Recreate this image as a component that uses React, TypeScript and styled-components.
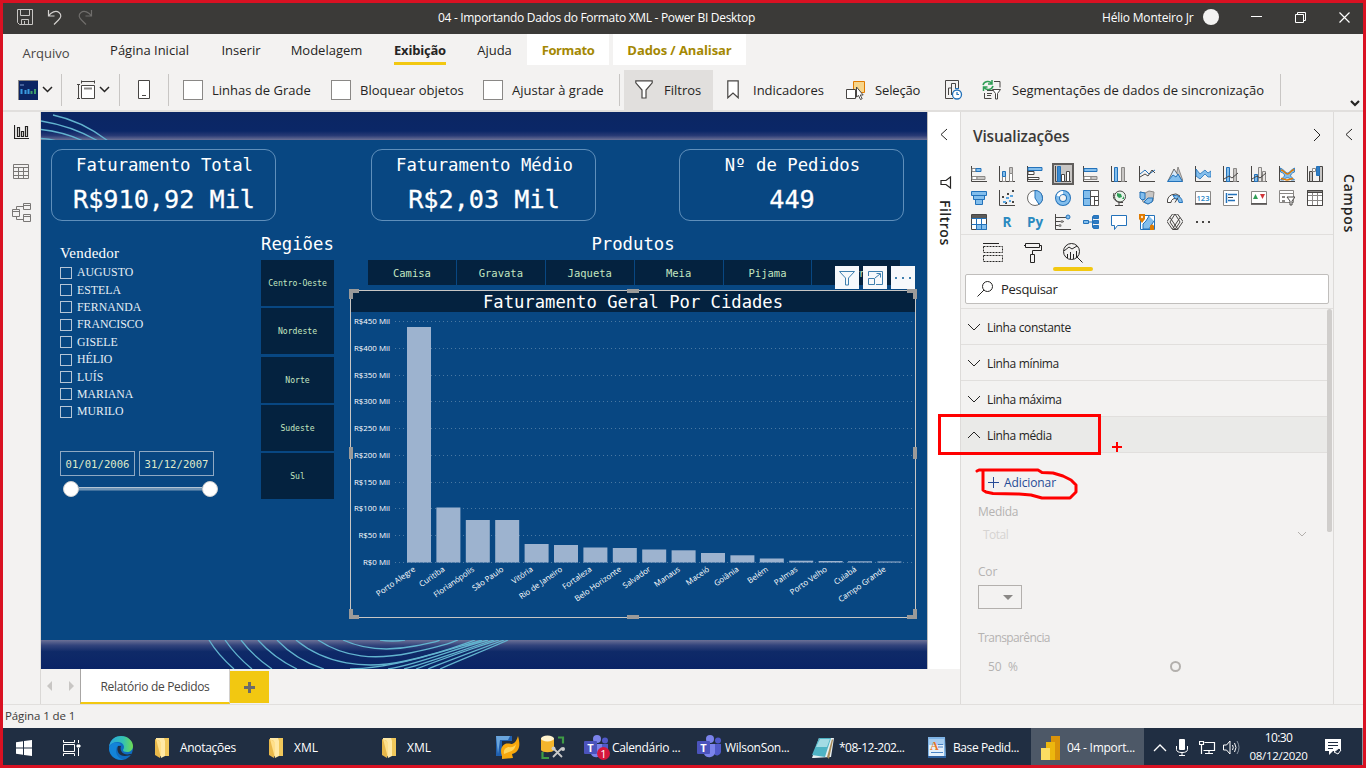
import React from "react";
import styled, { createGlobalStyle, css } from "styled-components";

const UI = `"Open Sans", "Noto Sans", sans-serif`;
const MONO = `"DejaVu Sans Mono", "Liberation Mono", monospace`;
const INK = "#252423";
const LINE = "#e1dfdd";

const GlobalStyle = createGlobalStyle`
  * { box-sizing: border-box; }
  body { margin: 0; font-family: ${UI}; font-size: 13px; color: ${INK}; overflow: hidden; }
  svg { display: block; flex: none; }
`;

const Frame = styled.div`
  position: relative;
  width: 1366px;
  height: 768px;
  border: 3px solid #d91122;
  background: #f3f2f1;
  display: flex;
  flex-direction: column;
`;

const Label = styled.span<{ $ls?: number; $size?: number; $w?: number }>`
  white-space: nowrap;
  font-size: ${(p) => p.$size ?? 13}px;
  letter-spacing: ${(p) => p.$ls ?? 0}px;
  font-weight: ${(p) => p.$w ?? 400};
`;

const Slot = styled.div<{ $w: number }>`
  width: ${(p) => p.$w}px;
  flex: none;
  display: flex;
  align-items: center;
`;

/* Title bar */
const TitleBar = styled.header`
  height: 31px;
  flex: none;
  background: #3b3a38;
  color: #fff;
  display: flex;
  align-items: center;
  padding-bottom: 3px;
  padding-left: 14px;
`;
const Avatar = styled.div`
  width: 16px;
  height: 16px;
  border-radius: 50%;
  background: #f3f2f1;
`;

/* Ribbon */
const TabRow = styled.nav`
  height: 33px;
  flex: none;
  display: flex;
`;
const RibbonTab = styled.div<{ $w: number; $kind?: "file" | "active" | "tool" }>`
  width: ${(p) => p.$w}px;
  height: 31px;
  flex: none;
  display: flex;
  align-items: center;
  justify-content: center;
  ${(p) => p.$kind === "file" && css`padding-top: 7px; color: #484644;`}
  ${(p) => p.$kind === "active" && css`border-bottom: 3px solid #f2c811; padding-top: 3px; margin: 0 31px 0 13px;`}
  ${(p) => p.$kind === "tool" && css`background: #fff; color: #a48803; margin-right: 4px;`}
`;
const Ribbon = styled.div`
  height: 45px;
  flex: none;
  display: flex;
  align-items: center;
  padding: 3px 0 1px 0;
  border-bottom: 2px solid ${LINE};
`;
const Divider = styled.i`
  width: 1px;
  height: 32px;
  background: #c8c6c4;
  flex: none;
`;
const Check = styled.i`
  width: 20px;
  height: 20px;
  border: 1px solid #8a8886;
  background: #fff;
  margin-right: 9px;
  flex: none;
`;
const FilterButton = styled.div`
  width: 89px;
  height: 40px;
  background: #e1dfdd;
  display: flex;
  align-items: center;
  gap: 11px;
  padding-left: 11px;
  margin: 0 14px 0 4px;
  flex: none;
`;

/* Body */
const Body = styled.div`
  height: 593px;
  flex: none;
  display: flex;
  border-bottom: 1px solid ${LINE};
`;
const Rail = styled.aside`
  width: 38px;
  border-right: 1px solid #dad8d6;
  display: flex;
  flex-direction: column;
  align-items: center;
  gap: 23.5px;
  padding: 12px 1px 0 0;
`;
const Center = styled.main`
  width: 919px;
  display: flex;
  flex-direction: column;
`;
const Stage = styled.div`
  display: flex;
  height: 557px;
`;
const Page = styled.section`
  width: 887px;
  background: #084782;
  border-right: 1px solid #c0bfbe;
  display: flex;
  flex-direction: column;
  color: #fff;
`;
const TopBand = styled.div`
  height: 28px;
  background: linear-gradient(180deg, #0b2663 0, #0b2767 68%, #283a75 84%, #6c7196 100%);
`;
const BottomBand = styled.div`
  height: 29px;
  background: linear-gradient(180deg, #6c7196 0, #33447c 18%, #0f2a68 40%, #0a2466 100%);
`;
const Cards = styled.div`
  display: flex;
  padding: 9px 0 0 10px;
  height: 81px;
`;
const Card = styled.div<{ $gap: number }>`
  width: 225px;
  height: 72px;
  border: 1px solid #5f8fbb;
  border-radius: 11px;
  margin-right: ${(p) => p.$gap}px;
  display: flex;
  flex-direction: column;
  align-items: center;
  font-family: ${MONO};
`;
const CardTitle = styled.div`
  font-size: 17.3px;
  line-height: 20px;
  margin-top: 5px;
  padding-left: 2px;
  white-space: pre;
`;
const CardValue = styled.div`
  font-size: 25.2px;
  line-height: 30px;
  margin-top: 10px;
  padding-left: 1px;
  -webkit-text-stroke: 0.3px #fff;
`;
const Lower = styled.div`
  display: flex;
  height: 419px;
`;
const Sellers = styled.div`
  width: 220px;
  padding: 23px 0 0 19px;
  font-family: "Liberation Serif", serif;
`;
const SellersTitle = styled.div`
  font-size: 15px;
  line-height: 18px;
  letter-spacing: 0.2px;
`;
const SellerRow = styled.div`
  height: 17.4px;
  display: flex;
  align-items: center;
  gap: 5px;
  font-size: 11.8px;
  color: #e6eef5;
`;
const SellerList = styled.div`
  padding-top: 2px;
`;
const SellerBox = styled.i`
  width: 12px;
  height: 12px;
  border: 1px solid #b6c6d6;
`;
const Dates = styled.div`
  display: flex;
  gap: 4px;
  margin-top: 30px;
`;
const DateBox = styled.div`
  width: 75px;
  height: 25px;
  border: 1px solid #8fa9c3;
  font: 10.6px/24px ${MONO};
  color: #dfe9c9;
  text-align: center;
`;
const Track = styled.div`
  display: flex;
  align-items: center;
  margin: 5px 0 0 3px;
  width: 155px;
`;
const Knob = styled.i`
  width: 16px;
  height: 16px;
  border-radius: 50%;
  background: #fff;
  border: 1px solid #cfcfcf;
`;
const Rope = styled.i`
  flex: 1;
  height: 4px;
  background: #6d93b5;
  border-top: 1px solid #b4c5d4;
  border-bottom: 1px solid #3f6f9c;
`;
const Regions = styled.div`
  width: 89px;
  padding-top: 13px;
  font-family: ${MONO};
`;
const SectionTitle = styled.div<{ $center?: boolean }>`
  font: 17.3px/20px ${MONO};
  text-align: ${(p) => (p.$center ? "center" : "left")};
`;
const RegionTile = styled.div`
  width: 73px;
  height: 46px;
  margin-bottom: 2.25px;
  background: #04223f;
  color: #c3e6c0;
  font-size: 8.15px;
  display: flex;
  align-items: center;
  justify-content: center;
`;
const RegionTiles = styled.div`
  margin-top: 6px;
`;
const Right = styled.div`
  width: 566px;
  padding-top: 13px;
`;
const ProductTiles = styled.div`
  position: relative;
  display: flex;
  gap: 1px;
  margin: 6px 0 0 18px;
`;
const ProductTile = styled.div`
  width: 87.9px;
  height: 25px;
  background: #04223f;
  color: #c3e6c0;
  font: 10.5px/26px ${MONO};
  text-align: center;
`;
const VisualTools = styled.div`
  position: absolute;
  left: 467px;
  top: 6px;
  display: flex;
  gap: 4px;
`;
const VisualTool = styled.div`
  width: 24px;
  height: 23px;
  background: #f6f8fb;
  display: flex;
  align-items: center;
  justify-content: center;
`;
const Chart = styled.div`
  position: relative;
  margin-top: 5px;
  width: 566px;
  height: 328px;
  border: 1px solid #c8c6c4;
  display: flex;
  flex-direction: column;
`;
const ChartTitle = styled.div`
  height: 21px;
  background: #04223f;
  text-align: center;
  font: 17.2px/22px ${MONO};
  white-space: pre;
`;
const Handles = styled.svg`
  position: absolute;
  left: -2px;
  top: -2px;
`;
const FilterPane = styled.aside`
  width: 32px;
  background: #fff;
  display: flex;
  flex-direction: column;
  align-items: center;
`;
const Vertical = styled.div<{ $mt: number; $size: number; $ls: number }>`
  writing-mode: vertical-rl;
  font-size: ${(p) => p.$size}px;
  line-height: 20px;
  font-weight: 600;
  letter-spacing: ${(p) => p.$ls}px;
  margin-top: ${(p) => p.$mt}px;
  margin-left: 1px;
  white-space: nowrap;
`;
const FunnelWrap = styled.div`
  margin: 34px 0 0 3px;
`;
const PageTabs = styled.div`
  height: 35px;
  display: flex;
`;
const Arrows = styled.div`
  width: 39px;
  display: flex;
  gap: 17px;
  padding: 12px 0 0 6px;
`;
const PageTab = styled.div`
  width: 150px;
  height: 35px;
  background: #fff;
  border-left: 1px solid #a8a6a4;
  border-right: 1px solid #d2d0ce;
  border-bottom: 2px solid #f2c811;
  display: flex;
  align-items: center;
  justify-content: center;
  padding-top: 1px;
  color: #484644;
`;
const AddPage = styled.div`
  width: 39px;
  height: 32px;
  margin-top: 2px;
  background: #f2c811;
  display: flex;
  align-items: center;
  justify-content: center;
`;

/* Visualizations pane */
const VisPane = styled.aside`
  width: 373px;
  border-left: 1px solid #dddbd9;
  display: flex;
  flex-direction: column;
`;
const PaneHead = styled.div`
  height: 50px;
  flex: none;
  padding: 0 12px 2px 12px;
  display: flex;
  align-items: center;
  justify-content: space-between;
  color: #3b3a39;
`;
const HeadChevron = styled.div`
  padding-bottom: 3px;
`;
const VisGrid = styled.div`
  height: 73px;
  flex: none;
  border-bottom: 1px solid ${LINE};
  display: grid;
  grid-template-columns: repeat(13, 28px);
  grid-auto-rows: 24px;
  align-content: start;
  padding-left: 10px;
`;
const VisCell = styled.div<{ $on?: boolean }>`
  width: 22px;
  height: 22px;
  margin: 1px 0 0 -3px;
  display: flex;
  align-items: center;
  justify-content: center;
  ${(p) => p.$on && css`background: #c8c6c4; border: 2px solid #605e5c;`}
`;
const ScriptGlyph = styled.span`
  font: 700 13.5px/20px ${UI};
  color: #2b8ac0;
`;
const PaneTabs = styled.div`
  height: 39px;
  flex: none;
  display: flex;
  padding-left: 12px;
`;
const PaneTab = styled.div<{ $on?: boolean }>`
  position: relative;
  width: 40px;
  height: 36px;
  display: flex;
  justify-content: center;
  padding-top: 8px;
  &::after {
    content: "";
    position: absolute;
    left: 0;
    right: 0;
    bottom: 0;
    height: 4px;
    border-radius: 2px;
    background: ${(p) => (p.$on ? "#f2c811" : "transparent")};
  }
`;
const Search = styled.div`
  margin: 0 4px 4px;
  height: 30px;
  width: 364px;
  flex: none;
  border: 1px solid #c0bebc;
  border-radius: 2px;
  background: #fff;
  display: flex;
  align-items: center;
  padding-left: 11px;
  gap: 7px;
`;
const Scroller = styled.div`
  flex: 1;
  display: flex;
  border-top: 1px solid ${LINE};
`;
const Sections = styled.div`
  width: 366px;
`;
const Thumb = styled.i`
  width: 5px;
  height: 223px;
  border-radius: 3px 3px 2px 2px;
  background: #d0cecc;
`;
const Section = styled.div<{ $open?: boolean }>`
  height: 36px;
  border-bottom: 1px solid ${LINE};
  background: ${(p) => (p.$open ? "#eaeae8" : "transparent")};
  display: flex;
  align-items: center;
  padding: 1px 0 0 6px;
  gap: 6px;
`;
const Fields = styled.div`
  padding: 19px 0 0 17px;
  color: #b5b3b1;
  display: flex;
  flex-direction: column;
`;
const AddLink = styled.div`
  height: 20px;
  padding-left: 10px;
  display: flex;
  align-items: center;
  gap: 5px;
  color: #264b96;
`;
const FieldLabel = styled.div<{ $mt: number }>`
  margin-top: ${(p) => p.$mt}px;
  height: 18px;
  display: flex;
  align-items: center;
`;
const SelectRow = styled.div`
  display: flex;
  align-items: center;
  justify-content: space-between;
  width: 329px;
  height: 20px;
  margin-top: 4px;
  padding-left: 5px;
  color: #d6d4d2;
`;
const ColorBox = styled.div`
  width: 44px;
  height: 24px;
  margin-top: 5px;
  border: 1px solid #b3b0ad;
  display: flex;
  align-items: center;
  justify-content: flex-end;
  padding-right: 8px;
`;
const Percent = styled.div`
  display: flex;
  align-items: center;
  height: 20px;
  margin-top: 10px;
  padding-left: 10px;
`;
const SliderDot = styled.i`
  width: 11px;
  height: 11px;
  border: 2px solid #b3b0ad;
  border-radius: 50%;
  margin-left: 152px;
`;
const FieldsPane = styled.aside`
  width: 30px;
  border-left: 1px solid #dddbd9;
  display: flex;
  flex-direction: column;
  align-items: center;
`;
const Status = styled.footer`
  height: 23px;
  flex: none;
  padding-left: 2px;
  line-height: 21px;
  color: #3b3a39;
`;

/* Taskbar */
const Taskbar = styled.div`
  height: 37px;
  flex: none;
  background: #202e42;
  color: #fff;
  display: flex;
  align-items: center;
`;
const Task = styled.div<{ $w: number; $pl?: number; $gap?: number; $on?: boolean }>`
  width: ${(p) => p.$w}px;
  height: 37px;
  flex: none;
  display: flex;
  align-items: center;
  padding: 2px 0 0 ${(p) => p.$pl ?? 0}px;
  gap: ${(p) => p.$gap ?? 0}px;
  ${(p) => p.$on && css`background: #4d5867;`}
`;
const Clock = styled.div`
  width: 61px;
  display: flex;
  flex-direction: column;
  align-items: center;
  line-height: 18px;
  padding-top: 1px;
`;

/* Hand-drawn marks over the window */
const MarkBox = styled.div`
  position: absolute;
  left: 935px;
  top: 411px;
  width: 163px;
  height: 41px;
  border: 3px solid #ff0000;
`;
const MarkInk = styled.svg`
  position: absolute;
  left: 970px;
  top: 435px;
`;

type ChevProps = { dir: "l" | "r" | "u" | "d"; s?: number; c?: string; w?: number };
const Chevron = ({ dir, s = 6, c = INK, w = 1 }: ChevProps) => {
  const L = s * 2;
  const horiz = dir === "l" || dir === "r";
  const W = (horiz ? s : L) + 2;
  const H = (horiz ? L : s) + 2;
  const d = {
    l: `M${s + 1} 1L1 ${s + 1}L${s + 1} ${L + 1}`,
    r: `M1 1L${s + 1} ${s + 1}L1 ${L + 1}`,
    u: `M1 ${s + 1}L${s + 1} 1L${L + 1} ${s + 1}`,
    d: `M1 1L${s + 1} ${s + 1}L${L + 1} 1`,
  }[dir];
  return (
    <svg width={W} height={H} fill="none" stroke={c} strokeWidth={w}>
      <path d={d} />
    </svg>
  );
};

const K = "#484644";
const B = "#2372ba";
const F = "#83beec";
const G = "#8a8886";
const axes = <path d="M.5 0V15.5H16" fill="none" stroke={K} />;

const visIcons: React.ReactNode[] = [
  <>{axes}<path d="M1 2.500h4v3H1zM1 10.500h5v3H1z" fill="#fff" stroke={G} /><path d="M5 2.500h5v3H5z" fill={F} stroke={B} /><path d="M6 10.500h8v3H6z" fill="#c8c6c4" stroke={G} /></>,
  <>{axes}<path d="M3.500 10.500h3v5h-3zM10.500 7.500h3v8h-3z" fill="#fff" stroke={G} /><path d="M3.500 5.500h3v5h-3z" fill={F} stroke={B} /><path d="M10.500 1.500h3v6h-3z" fill="#c8c6c4" stroke={G} /></>,
  <>{axes}<path d="M1 1.500h14v3H1z" fill={F} stroke={B} /><path d="M1 5.500h6v3H1zM1 11.500h11v2H1z" fill="#fff" stroke={K} /></>,
  <>{axes}<path d="M2.500.5h3v15h-3z" fill="#3a8ad0" stroke={B} /><path d="M6.500 8.500h3v7h-3zM11.500 5.500h3v10h-3z" fill="#fff" stroke={K} /></>,
  <>{axes}<path d="M1 2.500h13v3H1z" fill={F} stroke={B} /><path d="M1 10.500h7v3H1z" fill="#fff" stroke={G} /><path d="M8 10.500h6v3H8z" fill="#c8c6c4" stroke={G} /></>,
  <>{axes}<path d="M3.500 1.500h3v14h-3z" fill={F} stroke={B} /><path d="M10.500 1.500h3v14h-3z" fill="#c8c6c4" stroke={G} /></>,
  <>{axes}<path d="M1 8l5-4 4 4 6-4" fill="none" stroke={B} /><path d="M1 11l5-3 3 2 4-6 3 3" fill="none" stroke={K} /></>,
  <><path d="M11 1l5 14H8z" fill="#c8c6c4" stroke={G} /><path d="M1 15L7 3l8 12z" fill="#d8eafa" stroke={K} strokeWidth=".8" /><path d="M.5 15.500L6 9l3 2 2-3 4.500 7.500z" fill={F} stroke={B} /></>,
  <>{axes}<path d="M1 3l4 5 5-4 3 3 3-2v6h-3l-3-3-5 5-4-3z" fill={F} stroke={B} strokeWidth=".8" /></>,
  <>{axes}<path d="M3.500 1.500h3v14h-3z" fill={F} stroke={B} /><path d="M10.500 2.500h3v13h-3z" fill="#c8c6c4" stroke={G} /><path d="M1 13l5-3 3 2 6-5" fill="none" stroke={K} /></>,
  <>{axes}<path d="M3.500 8.500h3v7h-3z" fill={F} stroke={B} /><path d="M7.500 1.500h3v14h-3zM11.500 5.500h3v10h-3z" fill="#e8e6e4" stroke={G} /><path d="M1 13l5-3 3 2 6-5" fill="none" stroke={K} /></>,
  <>{axes}<path d="M1.500 2c4 2 5 5 7 5s3-3 7-5v4c-3 1-4 3-4 4l4 4h-3c-3-3-5-3-8 0h-3l4-4c0-2-1-3-4-4z" fill={F} stroke={B} strokeWidth=".8" /><path d="M2 4c4 1 4 4 6.500 4S11 5 15 3.500M2 12.500c3 0 4 1.500 6 1.500s4-1.500 6-1.500" fill="none" stroke="#e07b00" strokeWidth="1.400" /></>,
  <>{axes}<path d="M2.500 5.500h3v10h-3zM12.500.5h3v15h-3z" fill="#c8c6c4" stroke={K} /><path d="M5.500 2.500h3v3h-3z" fill="#fff" stroke={G} /><path d="M9.500.5h3v9h-3z" fill="#2e7cc4" stroke={B} /></>,
  <><path d="M.5 1.500h15v4H.5zM2.500 5.500h11v4h-11zM4.500 9.500h7v5h-7z" fill={F} stroke={B} /></>,
  <>{axes}<g fill={K}><path d="M3 6h2v2H3zM8 3h2v2H8zM13 0h2v2h-2zM6 12h2v2H6zM13 11h2v2h-2z" /></g><path d="M4 11h3v2H4zM7 7h3v2H7zM11 5h3v2h-3zM10 10h2v2h-2z" fill="#5ba6e0" /></>,
  <><circle cx="8" cy="8" r="7.500" fill="#fff" stroke={K} strokeWidth=".8" /><path d="M8 .5a7.500 7.500 0 0 1 4 13.800L8 8z" fill={F} stroke={B} /></>,
  <><circle cx="8" cy="8" r="5.500" fill="none" stroke={B} strokeWidth="5" /><circle cx="8" cy="8" r="5.500" fill="none" stroke={F} strokeWidth="3" /><path d="M8 2.500A5.500 5.500 0 0 0 3 6" fill="none" stroke="#fff" strokeWidth="3" /></>,
  <><path d="M.5.5h7v15h-7z" fill={F} stroke={B} /><path d="M7.500.5h8v6h-8zM7.500 6.500h4v9h-4zM11.500 6.500h4v4h-4zM11.500 10.500h4v5h-4z" fill="#fff" stroke={K} strokeWidth=".9" /><path d="M.5 8.500h7" stroke={B} /></>,
  <><circle cx="9" cy="6.500" r="5.500" fill="#e8f4ea" stroke={K} /><path d="M6 3l4 1 1 3-3 1-2-2zM11 9l2-3v3z" fill="#2f9e56" /><path d="M3 3c-2 5 1 9 6 9.500h3M8 12v3M4 15.500h8" fill="none" stroke={K} /></>,
  <><path d="M1 2l5 1 4-2 5 1-1 9-5 3-5-2-1-4z" fill="#c8c6c4" stroke={G} /><path d="M1 2l5 1v6l-3 1-2-2zM9 8h5l-1 4-4 2-4-2z" fill={F} stroke={B} /></>,
  <><path d="M.5 12.500A7.500 7.500 0 0 1 13 6l-3 3a4 4 0 0 0-6 3.500z" fill="#fff" stroke={K} /><path d="M6 5.500a7.500 7.500 0 0 1 9.500 7H12A4 4 0 0 0 8 8.500z" fill={F} stroke={B} /><path d="M8 12.500l3-5" stroke={K} /></>,
  <><path d="M.5 1.500h15v12H.5z" fill="#fff" stroke={G} /><path d="M0 14h16" stroke={K} strokeWidth="1.500" /><text x="8" y="10.500" textAnchor="middle" fontSize="7.500" fontWeight="600" fontFamily={UI} fill="#1f86c9">123</text></>,
  <><path d="M.5.5h15v15H.5z" fill="#fff" stroke={G} /><path d="M3.500 3v10M5 4.500h9M5 10.500h7" stroke={B} strokeWidth="1.500" /><path d="M5 7.500h5" stroke={K} /></>,
  <><path d="M.5 1.500h15v12H.5z" fill="#fff" stroke={G} /><path d="M0 14h16" stroke={K} strokeWidth="1.500" /><path d="M2 9l2.500-5L7 9z" fill="#2f9e56" /><path d="M9 4h5l-2.500 5z" fill="#d13438" /></>,
  <><path d="M.5.5h14v12H.5z" fill="#fff" stroke={G} /><path d="M1 3.500h13" stroke={G} /><path d="M3 6h3v2H3zM3 10h3v2H3z" fill={G} /><path d="M8 7h8l-3 4v4h-2v-4z" fill="#fff" stroke={K} /></>,
  <><path d="M.5.5h15v15H.5zM.5 5.500h15M.5 10.500h15M5.500 2v13.500M10.500 2v13.500" fill="#fff" stroke={G} /><path d="M.5.5h15v2H.5z" fill={G} stroke={K} /><path d="M.5.5v15h15V.5" fill="none" stroke={K} /></>,
  <><path d="M.5.5h15v15H.5z" fill="#fff" stroke={K} /><path d="M5.500 10.500h10v5h-10zM10.500 4v11.500" fill={F} stroke={B} /><path d="M.5 4.500h15M.5 10.500h15M5.500 1v14" stroke={B} /><path d="M1 1h14v3H1z" fill="#5c5a58" /></>,
  "R",
  "Py",
  <>{axes}<path d="M1 3.500h10M1 7.500h8M1 11.500h4" stroke={K} /><circle cx="13" cy="3" r="2" fill={F} stroke={B} /><circle cx="7" cy="7.500" r="1.500" fill={G} /><circle cx="5" cy="11.500" r="1.500" fill={G} /></>,
  <><path d="M.5 6.500h5v3h-5z" fill={F} stroke={B} /><path d="M6 8h3M9.500 2.500v11M9 3h2M9 13h2" stroke={B} /><path d="M10.500 1.500h5v3h-5zM10.500 6.500h5v3h-5zM10.500 11.500h5v3h-5z" fill="#2e7cc4" stroke={B} /></>,
  <path d="M.5 1.500h15v10h-9l-3 4v-4h-3z" fill="#fff" stroke={B} />,
  <><path d="M1.500 1.500h14v14h-14z" fill="#fff" stroke={B} /><path d="M10 2L7 7l-3 3v5h6l3-5 2-3" fill={F} stroke={B} /><path d="M0 0h6v5L3 9 0 5z" fill="#e07b00" /><path d="M3 1.500l1.200 1.500L3 4.500 1.800 3z" fill="#fff" /><path d="M11 13a2 2 0 1 1 4-1v4h-4z" fill="#e07b00" /></>,
  <path d="M5.500 0L0 7.500 5.500 15.500H10.500L16 7.500 10.500 0zM8 0L3 8l5 7.500M3 3.500l8 12M8 0l5 8-5 7.500M13 3.500L5.500 15" fill="none" stroke={K} />,
  <g fill={K}><path d="M1 7h2v2H1zM7 7h2v2H7zM13 7h2v2h-2z" /></g>,
];

const cities: [string, number][] = [
  ["Porto Alegre", 327], ["Curitiba", 507.5], ["Florianópolis", 520], ["São Paulo", 520],
  ["Vitória", 544], ["Rio de Janeiro", 545], ["Fortaleza", 547.5], ["Belo Horizonte", 548],
  ["Salvador", 549.5], ["Manaus", 550.3], ["Maceió", 553], ["Goiânia", 555.3],
  ["Belém", 558.5], ["Palmas", 560.7], ["Porto Velho", 561], ["Cuiabá", 561.3], ["Campo Grande", 561.5],
];

const Plot = () => (
  <svg width="564" height="305" viewBox="351 312 564 305" fontFamily={`"Open Sans", sans-serif`}>
    {Array.from({ length: 10 }, (_, i) => {
      const y = 321.5 + i * 26.75;
      return (
        <g key={i}>
          <text x="390" y={y + 2.7} fontSize="7.9" fontWeight="500" fill="#fff" textAnchor="end">{`R$${450 - i * 50} Mil`}</text>
          <path d={`M395 ${Math.floor(y) + 0.5}H914`} stroke="#4a78a2" strokeDasharray="1 3" />
        </g>
      );
    })}
    {cities.map(([name, top], i) => {
      const x = 407 + i * 29.4;
      return (
        <g key={name}>
          <rect x={x} y={top} width="24" height={562.5 - top} fill="#9db3cf" />
          <text transform={`translate(${x + 9} 570.5) rotate(-35)`} fontSize="7.9" fontWeight="500" fill="#fff" textAnchor="end">{name}</text>
        </g>
      );
    })}
  </svg>
);

const Folder = () => (
  <svg width="15" height="20" viewBox="0 0 15 20">
    <path d="M5 0h9v18H5z" fill="#f0c75a" />
    <path d="M1 0h8l1 3v15l-4 2V6L1 3z" fill="#ffe9a6" />
    <path d="M0 1l5 2v17l-5-3z" fill="#e8b84a" />
    <path d="M1 1l5 3v16" fill="#ffe08a" />
  </svg>
);
const Teams = ({ badge }: { badge?: boolean }) => (
  <svg width="26" height="26" viewBox="0 0 26 26">
    <circle cx="13" cy="4" r="4" fill="#7b83eb" />
    <circle cx="21" cy="5.500" r="3" fill="#5059c9" />
    <path d="M17 9h7v8a4 4 0 0 1-7 2z" fill="#5059c9" />
    <path d="M7 9h11v9a6 6 0 0 1-11 1z" fill="#7b83eb" />
    <rect x="0" y="6" width="13" height="13" rx="1" fill="#4b53bc" />
    <text x="6.500" y="16.500" fontFamily={UI} fontWeight="700" fontSize="11" fill="#fff" textAnchor="middle">T</text>
    {badge && <><circle cx="19.500" cy="18.500" r="6.500" fill="#d5173d" /><text x="19.500" y="22.500" fontFamily={UI} fontSize="11" fill="#fff" textAnchor="middle">1</text></>}
  </svg>
);

export default function App() {
  return (
    <Frame>
      <GlobalStyle />
      <TitleBar>
        <Slot $w={30}>
          <svg width="16" height="16" fill="none" stroke="#c8c6c4"><path d="M.5.500h15v15h-13l-2-2zM3.500.5v6h9v-6M4.500 15.500v-5h7v5M7.500 15v-3" /></svg>
        </Slot>
        <Slot $w={30}>
          <svg width="16" height="16" fill="none" stroke="#d2d0ce" strokeWidth="1.200"><path d="M1.500 1v6h6M1.500 7C4 3 9 1 12 3.500s2 5-.5 7.500L7 15.500" /></svg>
        </Slot>
        <Slot $w={361}>
          <svg width="16" height="16" fill="none" stroke="#6f6d6b" strokeWidth="1.200"><path d="M14.500 1v6h-6M14.500 7C12 3 7 1 4 3.500s-2 5 .5 7.500L9 15.500" /></svg>
        </Slot>
        <Slot $w={664}><Label $size={12} $ls={-0.31}>04 - Importando Dados do Formato XML - Power BI Desktop</Label></Slot>
        <Slot $w={101}><Label $size={12} $ls={-0.2}>Hélio Monteiro Jr</Label></Slot>
        <Slot $w={48}><Avatar /></Slot>
        <Slot $w={44}><svg width="11" height="2"><path d="M0 .5h11" stroke="#fff" /></svg></Slot>
        <Slot $w={44}><svg width="11" height="11" fill="none" stroke="#fff"><path d="M.5 2.500h8v8h-8zM2.500 2.500v-2h8v8h-2" /></svg></Slot>
        <svg width="11" height="11" stroke="#fff" strokeWidth="1.200"><path d="M.5.5l10 10M10.500.5l-10 10" /></svg>
      </TitleBar>

      <TabRow>
        <RibbonTab $w={86} $kind="file"><Label>Arquivo</Label></RibbonTab>
        <RibbonTab $w={121}><Label>Página Inicial</Label></RibbonTab>
        <RibbonTab $w={62}><Label>Inserir</Label></RibbonTab>
        <RibbonTab $w={109}><Label>Modelagem</Label></RibbonTab>
        <RibbonTab $w={52} $kind="active"><Label $w={700} $ls={-0.2}>Exibição</Label></RibbonTab>
        <RibbonTab $w={35}><Label>Ajuda</Label></RibbonTab>
        <Slot $w={15} />
        <RibbonTab $w={82} $kind="tool"><Label $w={700} $ls={-0.4}>Formato</Label></RibbonTab>
        <RibbonTab $w={133} $kind="tool"><Label $w={700} $ls={-0.1}>Dados / Analisar</Label></RibbonTab>
      </TabRow>

      <Ribbon>
        <Slot $w={15} />
        <Slot $w={24}>
          <svg width="20" height="20"><path d="M0 0h20v20H0z" fill="#0c2563" /><path d="M0 .5h20M.5 0v20" stroke="#8a8886" /><path d="M3.500 14V9M7.500 14v-4M10.500 14V9" stroke="#3a9ae0" strokeWidth="2" /><path d="M13.500 14v-3M17 14V9" stroke="#3d9d6b" strokeWidth="2" /><path d="M2 5h4" stroke="#7a9ad0" /></svg>
        </Slot>
        <Slot $w={19}><Chevron dir="d" s={4.5} w={1.5} /></Slot>
        <Divider />
        <Slot $w={15} />
        <Slot $w={22}>
          <svg width="19" height="19" fill="none" stroke={K}><path d="M4.500 5.500h13v13h-13z" fill="#fff" /><path d="M7 8.500h8" stroke={G} strokeWidth="2" /><path d="M4.500.5v3M17.500.5v3M4.500 1.500h13M0 4.500h3M0 18.500h3M1.500 4.500v14" /></svg>
        </Slot>
        <Slot $w={20}><Chevron dir="d" s={4.5} w={1.5} /></Slot>
        <Divider />
        <Slot $w={18} />
        <Slot $w={30}>
          <svg width="12" height="19" fill="#fff" stroke={K}><path d="M.5.500h11v18H.5zM4 15.500h4" /></svg>
        </Slot>
        <Divider />
        <Slot $w={14} />
        <Slot $w={148}><Check /><Label $size={13}>Linhas de Grade</Label></Slot>
        <Slot $w={152}><Check /><Label $size={13}>Bloquear objetos</Label></Slot>
        <Slot $w={136}><Check /><Label $size={13}>Ajustar à grade</Label></Slot>
        <Divider />
        <FilterButton>
          <svg width="18" height="19" fill="#fff" stroke={K} strokeWidth="1.200"><path d="M.8.8h16.400v2L11 10v8H7v-8L.8 2.800z" /></svg>
          <Label>Filtros</Label>
        </FilterButton>
        <Slot $w={26}><svg width="12" height="19" fill="#fff" stroke={K} strokeWidth="1.200"><path d="M.8.8h10.400v17L6 13 .8 17.800z" /></svg></Slot>
        <Slot $w={93}><Label>Indicadores</Label></Slot>
        <Slot $w={29}>
          <svg width="20" height="20"><path d="M7.500 1.500h11v11h-11z" fill="#f7d58a" stroke="#e07b00" /><path d="M.5 9.500h9v9h-9z" fill="#fff" stroke={K} /><path d="M10.500 7v10l2-1.500 2 4 1.700-.8-2-3.700h3z" fill="#fff" stroke={K} /></svg>
        </Slot>
        <Slot $w={70}><Label $ls={-0.15}>Seleção</Label></Slot>
        <Slot $w={37}>
          <svg width="18" height="20" fill="none" stroke={K}><path d="M8 18.500H.5V.5h13V8" /><path d="M3.500 15v-7h3v7M6.500 8V3.500h4V9" /><g stroke="#2372ba"><circle cx="12" cy="14.500" r="4.500" fill="#fff" strokeWidth="1.300" /><path d="M10 8.500h4M12 12v2.500h2" strokeWidth="1.200" /></g></svg>
        </Slot>
        <Slot $w={30}>
          <svg width="20" height="20" fill="none" stroke={K}><path d="M12 1.500h6v6M2.500 13v5.500h7M5 10.500h7M5 13.500h5M5 15.500h4" /><path d="M10.500 9.500h8l-3 4v5.500h-2v-5.500z" fill="#fff" /><g stroke="#2f9e56" strokeWidth="1.500"><path d="M1 5c1-4 7-5 9-1M10 0v4H6M11 6c-1 4-7 5-9 1M1.500 11V7h4" /></g></svg>
        </Slot>
        <Slot $w={268}><Label>Segmentações de dados de sincronização</Label></Slot>
        <Divider />
        <Slot $w={69} />
        <Slot $w={10}><svg width="10" height="34"><path d="M1 28l4 4 4-4" fill="none" stroke={INK} strokeWidth="2.200" /></svg></Slot>
      </Ribbon>

      <Body>
        <Rail>
          <svg width="15" height="16" fill="none" stroke={INK}><path d="M.5 1v13.500H15M3.500 3.500h2v9h-2zM7.500 7.500h2v5h-2zM11.500 2.500h2v10h-2z" strokeWidth="1.200" /></svg>
          <svg width="17" height="16" fill="none" stroke="#797775"><path d="M.5.5h15v14H.5zM.5 3.500h15M.5 7.500h15M.5 11.500h15M5.500 3.500v11M10.500 3.500v11" /></svg>
          <svg width="19" height="19" fill="none" stroke="#797775"><path d="M.5 6.500h7v7h-7zM.5 8.500h7M11.500.5h7v6h-7zM11.500 2.500h7M11.500 11.500h7v7h-7zM11.500 13.500h7M4.500 6V3.500H11M4.500 14v2.500H11" /></svg>
        </Rail>
        <Center>
          <Stage>
            <Page>
              <TopBand>
                <svg width="886" height="28" viewBox="41 112 886 28" fill="none" stroke="#62b4cf" strokeWidth="1.300">
                  <path d="M53 115Q82 121 108 141M41 121Q72 126 98 141M41 129.500Q64 132 83 141M41 138.500Q50 139 57 141" />
                </svg>
              </TopBand>
              <Cards>
                <Card $gap={95}><CardTitle>Faturamento Total</CardTitle><CardValue>R$910,92 Mil</CardValue></Card>
                <Card $gap={83}><CardTitle>Faturamento Médio</CardTitle><CardValue>R$2,03 Mil</CardValue></Card>
                <Card $gap={0}><CardTitle>Nº de Pedidos</CardTitle><CardValue>449</CardValue></Card>
              </Cards>
              <Lower>
                <Sellers>
                  <SellersTitle>Vendedor</SellersTitle>
                  <SellerList>
                    {["AUGUSTO", "ESTELA", "FERNANDA", "FRANCISCO", "GISELE", "HÉLIO", "LUÍS", "MARIANA", "MURILO"].map((n) => (
                      <SellerRow key={n}><SellerBox />{n}</SellerRow>
                    ))}
                  </SellerList>
                  <Dates><DateBox>01/01/2006</DateBox><DateBox>31/12/2007</DateBox></Dates>
                  <Track><Knob /><Rope /><Knob /></Track>
                </Sellers>
                <Regions>
                  <SectionTitle>Regiões</SectionTitle>
                  <RegionTiles>
                    {["Centro-Oeste", "Nordeste", "Norte", "Sudeste", "Sul"].map((r) => <RegionTile key={r}>{r}</RegionTile>)}
                  </RegionTiles>
                </Regions>
                <Right>
                  <SectionTitle $center>Produtos</SectionTitle>
                  <ProductTiles>
                    {["Camisa", "Gravata", "Jaqueta", "Meia", "Pijama", "Terno"].map((p) => <ProductTile key={p}>{p}</ProductTile>)}
                    <VisualTools>
                      <VisualTool><svg width="16" height="16" fill="none" stroke="#3f7fae"><path d="M.5 1.500h15L9.500 8v7h-3V8z" /></svg></VisualTool>
                      <VisualTool><svg width="15" height="14" fill="none" stroke="#3f7fae"><path d="M.5 5V.5h14v13H8M.5 7.500h6v6h-6zM7 7l5-4M8.500 2.500h4v4" /></svg></VisualTool>
                      <VisualTool><svg width="16" height="4" fill="#3f7fae"><path d="M0 1h2v2H0zM7 1h2v2H7zM14 1h2v2h-2z" /></svg></VisualTool>
                    </VisualTools>
                  </ProductTiles>
                  <Chart>
                    <ChartTitle>Faturamento Geral Por Cidades</ChartTitle>
                    <Plot />
                    <Handles width="568" height="330" fill="none" stroke="#9b9a99" strokeWidth="4">
                      <path d="M2 10V2h8M558 2h8v8M566 320v8h-8M10 328H2v-8M278 2h12M278 328h12M2 158v12M566 158v12" />
                    </Handles>
                  </Chart>
                </Right>
              </Lower>
              <BottomBand>
                <svg width="886" height="29" viewBox="41 640 886 29" fill="none" stroke="#62b4cf" strokeWidth="1.300">
                  <path d="M209 640Q218 655 234 669M225 640Q236 656 252 669M241 640Q253 656 272 669M258 640Q274 658 297 669M277 640Q296 660 324 669" />
                  <path d="M296 640C325 664 365 670 405 661S455 647 475 640M318 640C345 658 375 660 410 653S450 643 458 640M343 640C365 650 390 651 415 646S435 642 440 640" />
                  <path d="M380 640q12 2 25 0M350 669C395 668 440 652 482 640M388 669C420 664 450 650 488 640M404 669C430 662 462 650 494 640M416 669C440 660 470 649 499 640M428 669C450 660 478 650 504 640M440 669C460 660 486 650 508 640" />
                </svg>
              </BottomBand>
            </Page>
            <FilterPane>
              <svg width="8" height="30"><path d="M7 17L1 22.500 7 28" fill="none" stroke={INK} /></svg>
              <FunnelWrap><svg width="12" height="13" viewBox="0 0 12 13" fill="none" stroke={INK} strokeWidth="1.200"><path d="M10.500 1v11L6 8.500H1v-4h5z" /></svg></FunnelWrap>
              <Vertical $mt={11} $size={14} $ls={0.5}>Filtros</Vertical>
            </FilterPane>
          </Stage>
          <PageTabs>
            <Arrows>
              <svg width="5" height="10"><path d="M5 0v10L0 5z" fill="#c8c6c4" /></svg>
              <svg width="5" height="10"><path d="M0 0v10l5-5z" fill="#c8c6c4" /></svg>
            </Arrows>
            <PageTab><Label $size={12} $ls={-0.32}>Relatório de Pedidos</Label></PageTab>
            <AddPage><svg width="11" height="11"><path d="M5.500 0v11M0 5.500h11" stroke="#6b6a68" strokeWidth="3" /></svg></AddPage>
          </PageTabs>
        </Center>
        <VisPane>
          <PaneHead>
            <Label $size={15.5} $w={600} $ls={-0.2}>Visualizações</Label>
            <HeadChevron><Chevron dir="r" s={6} /></HeadChevron>
          </PaneHead>
          <VisGrid>
            {visIcons.map((icon, i) => (
              <VisCell key={i} $on={i === 3}>
                {typeof icon === "string" ? <ScriptGlyph>{icon}</ScriptGlyph> : <svg width="16" height="16" viewBox="0 0 16 16">{icon}</svg>}
              </VisCell>
            ))}
          </VisGrid>
          <PaneTabs>
            <PaneTab><svg width="20" height="20" fill="none" stroke={INK}><path d="M0 .5h16" /><path d="M.5 3.500h19v6H.5zM.5 12.500h19v6H.5z" strokeDasharray="2 1" /></svg></PaneTab>
            <PaneTab><svg width="19" height="21" fill="none" stroke={INK}><path d="M1.500.5h14v4h-14zM0 2.500h1M15.500 2.500h2v5h-9v4M6.500 11.500h4v8h-4z" /></svg></PaneTab>
            <PaneTab $on><svg width="20" height="20" fill="none" stroke={INK}><circle cx="8.500" cy="8.500" r="8" /><path d="M14 14l5.500 5.500M1 8l5-4 3 2 5-3M4.500 15v-4M7.500 16V9M10.500 16v-5M13.500 14V8" /></svg></PaneTab>
          </PaneTabs>
          <Search>
            <svg width="17" height="16" fill="none" stroke={INK}><circle cx="10.500" cy="5.500" r="5" /><path d="M7 9l-6.500 6.500" /></svg>
            <Label $size={13} $ls={-0.3}>Pesquisar</Label>
          </Search>
          <Scroller>
            <Sections>
              {["Linha constante", "Linha mínima", "Linha máxima"].map((t) => (
                <Section key={t}><Chevron dir="d" s={6} /><Label $size={12} $ls={-0.35}>{t}</Label></Section>
              ))}
              <Section $open><Chevron dir="u" s={6} /><Label $size={12} $ls={-0.35}>Linha média</Label></Section>
              <Fields>
                <AddLink><svg width="11" height="11" stroke="#264b96"><path d="M5.500 0v11M0 5.500h11" /></svg><Label $size={12} $ls={-0.1}>Adicionar</Label></AddLink>
                <FieldLabel $mt={10}><Label $size={12} $ls={-0.3}>Medida</Label></FieldLabel>
                <SelectRow><Label $size={12} $ls={-0.5}>Total</Label><Chevron dir="d" s={4} c="#b3b0ad" /></SelectRow>
                <FieldLabel $mt={18}><Label $size={12} $ls={-0.2}>Cor</Label></FieldLabel>
                <ColorBox><svg width="10" height="5"><path d="M0 0h10L5 5z" fill="#8a8886" /></svg></ColorBox>
                <FieldLabel $mt={19}><Label $size={12} $ls={-0.6}>Transparência</Label></FieldLabel>
                <Percent><Slot $w={20}><Label $size={12}>50</Label></Slot><Label $size={12}>%</Label><SliderDot /></Percent>
              </Fields>
            </Sections>
            <Thumb />
          </Scroller>
        </VisPane>
        <FieldsPane>
          <svg width="8" height="44"><path d="M7 17L1 22.500 7 28" fill="none" stroke={INK} /></svg>
          <Vertical $mt={18} $size={14} $ls={0.8}>Campos</Vertical>
        </FieldsPane>
      </Body>

      <Status><Label $size={11.5} $ls={-0.1}>Página 1 de 1</Label></Status>

      <Taskbar>
        <Task $w={60} $pl={13}><svg width="16" height="16" fill="#fff"><path d="M0 2.300L7 1.300V7.500H0zM8 1.100L16 0v7.500H8zM0 8.500h7v6.200L0 13.700zM8 8.500h8V16l-8-1.100z" /></svg></Task>
        <Task $w={46}><svg width="18" height="16" fill="none" stroke="#fff"><path d="M.5 0v2.500h11V0M.5 4.500h11v7H.5zM.5 16v-2.500h11V16M15.500 0v3M15.500 8v8" /><path d="M14 5h3v2h-3z" fill="#fff" /></svg></Task>
        <Task $w={46}>
          <svg width="24" height="24" viewBox="0 0 24 24">
            <defs><linearGradient id="e1"><stop offset="0" stopColor="#2aa7e0" /><stop offset=".6" stopColor="#35c2b0" /><stop offset="1" stopColor="#6fdc4f" /></linearGradient></defs>
            <circle cx="12" cy="12" r="12" fill="#0f6cc0" />
            <path d="M0 11C1 3 7 0 12 0c7 0 12 5 12 10 0 4-3 6-6 6-3 0-4-1-4-2s1-1 1-3-2-5-6-5C5 6 1 8 0 11z" fill="url(#e1)" />
            <path d="M9 10c-2 5 1 10 7 10 3 0 5-1 6-1 1-1 0-1-1-1-6 2-11-3-9-8z" fill="#202e42" />
            <path d="M0 12c2-6 9-7 12-3-4 0-5 3-5 6 0 4 3 8 8 8.500C6 25 0 19 0 12z" fill="#1384d8" />
          </svg>
        </Task>
        <Task $w={114} $gap={10}><Folder /><Label $size={12} $ls={-0.3}>Anotações</Label></Task>
        <Task $w={113} $gap={10}><Folder /><Label $size={12}>XML</Label></Task>
        <Task $w={114} $gap={10}><Folder /><Label $size={12}>XML</Label></Task>
        <Task $w={45}>
          <svg width="24" height="24"><path d="M0 0h16v5H6v15H0z" fill="#1f5fae" /><path d="M0 0h14l-2 4H4L2 18z" fill="#6aa5dc" /><path d="M6 20c-2-5-1-10 3-12 3-1 6 0 7 0 3-1 5-4 6-8 3 10 1 16-6 18l1 4-11 1z" fill="#f7a80d" /><path d="M8 18c-1-4 2-7 5-7 3 1 6-1 7-3-1 5-3 7-7 8z" fill="#ffd65c" /></svg>
        </Task>
        <Task $w={43}>
          <svg width="24" height="25"><path d="M0 3v12c1 3 12 3 13 0V3z" fill="#f4b52c" /><ellipse cx="6.500" cy="3.500" rx="6.500" ry="3" fill="#fff3cf" /><path d="M17 2.500h5v6M1.500 17v6H8" fill="none" stroke="#3f9b45" strokeWidth="2.200" /><path d="M12 13l9 9M21 13l-9 9" stroke="#c8c8c8" strokeWidth="1.800" /><circle cx="12.500" cy="13.500" r="2" fill="#ccc" /><circle cx="22" cy="14" r="2" fill="#ccc" /></svg>
        </Task>
        <Task $w={113} $gap={2}><Teams badge /><Label $size={12} $ls={-0.35}>Calendário ...</Label></Task>
        <Task $w={115} $gap={2}><Teams /><Label $size={12} $ls={-0.3}>WilsonSon...</Label></Task>
        <Task $w={116} $gap={5}>
          <svg width="22" height="22"><path d="M7 1h15l-3 19-17 1H0z" fill="#e8f0f2" /><path d="M7 1h12l-6 19L0 18z" fill="#4fb3c4" /><path d="M8 2h10l-3 8H4z" fill="#a4dbe4" /><path d="M20 2l1 1-4 19-2-2z" fill="#a98c5a" /></svg>
          <Label $size={12} $ls={-0.5}>*08-12-202...</Label>
        </Task>
        <Task $w={103} $gap={7}>
          <svg width="18" height="22"><path d="M0 0h17l1 20H0z" fill="#7fb4e6" /><path d="M1 2h15v17H1z" fill="#e3effa" /><path d="M1 2h15v6H1z" fill="#a7cdf0" /><text x="2" y="13" fontFamily="Liberation Serif" fontWeight="700" fontSize="12" fill="#e8782a">A</text><path d="M10 7.500h5M10 10h5M3 15.500h12" stroke="#4a83c4" /><path d="M0 20h18" stroke="#2b5f9e" strokeWidth="2" /></svg>
          <Label $size={12} $ls={-0.4}>Base Pedid...</Label>
        </Task>
        <Task $w={113} $pl={10} $gap={7} $on>
          <svg width="19" height="24"><path d="M10 0h9v24h-9z" fill="#d9920a" /><path d="M5 6h9v18H5z" fill="#edb70e" /><path d="M0 12h9v12H0z" fill="#fbdc62" /></svg>
          <Label $size={12} $ls={-0.25}>04 - Import...</Label>
        </Task>
        <Task $w={32} $pl={9}><Chevron dir="u" s={6} c="#fff" w={1.3} /></Task>
        <Task $w={23}><svg width="12" height="17"><rect x="3" y="0" width="6" height="11" rx="1" fill="#fff" /><path d="M.5 7v3.500c0 2 2 3 5.500 3s5.500-1 5.500-3V7M6 13v3M3 16.500h6" stroke="#fff" fill="none" /></svg></Task>
        <Task $w={24}><svg width="17" height="15" fill="none" stroke="#fff"><path d="M5.500 2.500h10v8h-11M10 11v3M6 13.500h8M.5 1.500h4v3h-4zM2.500 5v9" strokeWidth="1.200" /></svg></Task>
        <Task $w={25}><svg width="17" height="15" fill="none" stroke="#fff"><path d="M.5 5h3l3.500-4v13l-3.500-4h-3zM9.500 5q1.500 2.500 0 5M11.500 3q3 4.500 0 9" /><path d="M14 1q4 6.500 0 13" stroke="#8a95a3" /></svg></Task>
        <Clock><Label $size={12} $ls={-0.6}>10:30</Label><Label $size={11.5} $ls={-0.3}>08/12/2020</Label></Clock>
        <Task $w={53} $pl={16}><svg width="18" height="17"><path d="M0 0h16v12h-8l-4 4v-4H0z" fill="#fff" /><path d="M3 3.500h10M3 6.500h10M3 9.500h5" stroke="#202e42" /><path d="M9 13l5-4 2 2-3 4z" fill="#202e42" stroke="#fff" /></svg></Task>
        <Slot $w={1}><svg width="1" height="37"><path d="M.5 0v37" stroke="#8a929c" /></svg></Slot>
      </Taskbar>

      <MarkBox />
      <MarkInk width="150" height="70" fill="none" stroke="#ff0000" strokeWidth="3" strokeLinejoin="round" strokeLinecap="round">
        <path d="M4 33l2-1H65L69 34.500 80 35 90 38 98 42 103 47V54L97 60H69L58 57 46 56 20 55.500 13 54 10 52V33" />
        <path d="M139 9h10M144 4v10" strokeWidth="2" strokeLinecap="butt" />
      </MarkInk>
    </Frame>
  );
}
